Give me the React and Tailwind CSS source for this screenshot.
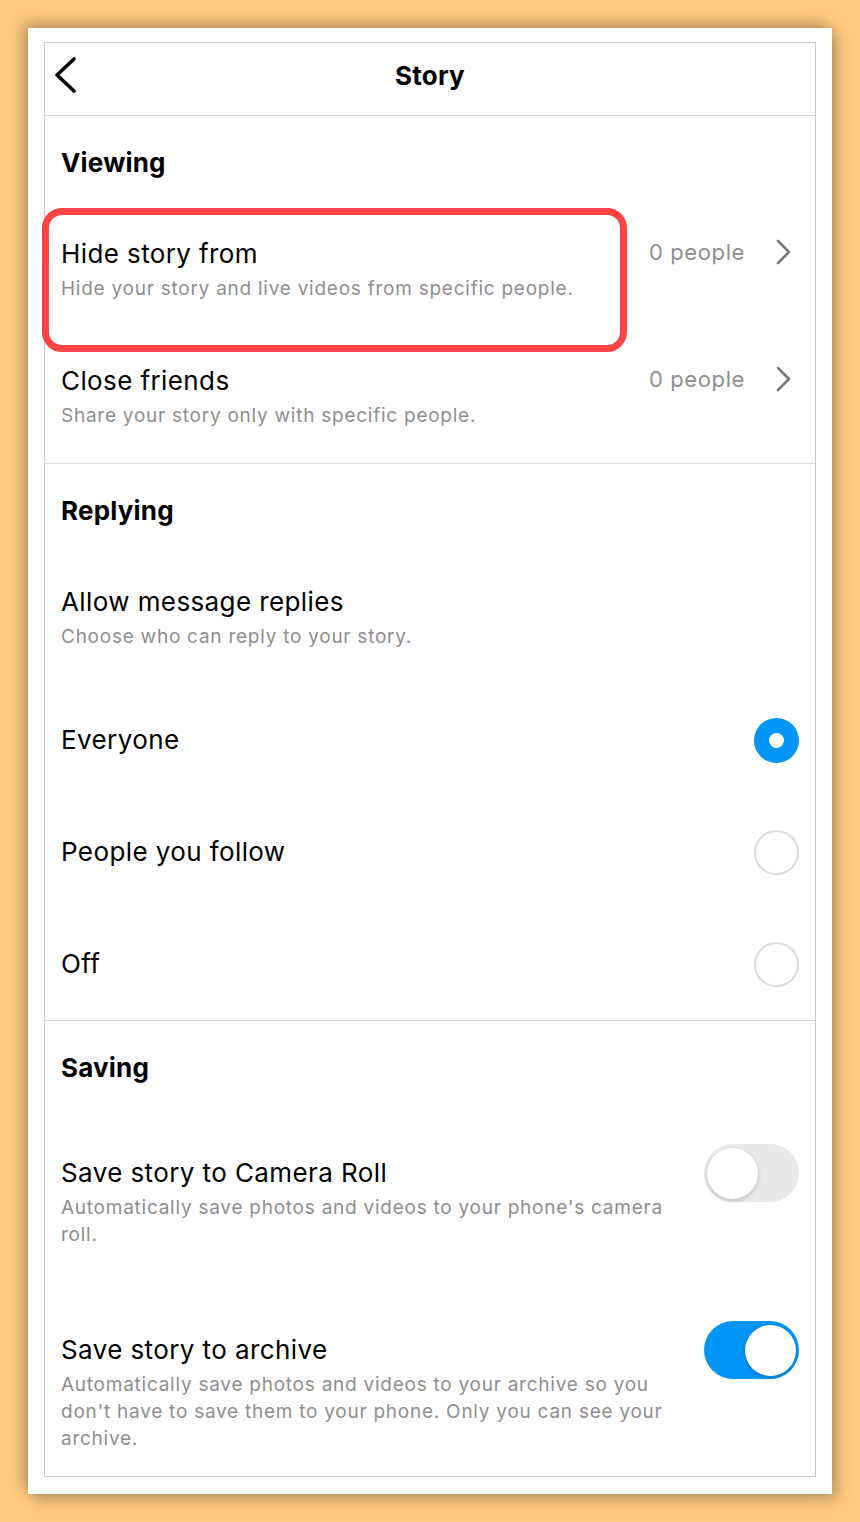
import { useState } from 'react';

const font = { fontFamily: 'Inter, "Noto Sans", sans-serif' };

const Chevron = () => (
  <svg width="18" height="28" viewBox="0 0 18 28" fill="none">
    <path d="M3 3 L14 14 L3 25" stroke="#7a7a7a" strokeWidth="2.6" strokeLinecap="round" strokeLinejoin="round" />
  </svg>
);

const Radio = ({ on }) =>
  on ? (
    <div className="w-[45px] h-[45px] rounded-full bg-[#0095f6] flex items-center justify-center">
      <div className="w-[15px] h-[15px] rounded-full bg-white" />
    </div>
  ) : (
    <div className="w-[45px] h-[45px] rounded-full border-2 border-[#dbdbdb]" />
  );

const Toggle = ({ on }) => (
  <div
    className={`w-[95px] h-[58px] rounded-full flex items-center px-[3px] ${
      on ? 'bg-[#0095f6] justify-end' : 'bg-[#e9e9e9] justify-start'
    }`}
  >
    <div className="w-[51px] h-[51px] rounded-full bg-white shadow-[0_2px_5px_rgba(0,0,0,0.2)]" />
  </div>
);

const Heading = ({ children }) => (
  <div className="h-[92px] flex items-center px-[16px]">
    <h2 className="text-[26px] font-bold text-black tracking-[0.2px]">{children}</h2>
  </div>
);

const Title = ({ children }) => (
  <p className="text-[26px] leading-[32px] text-black tracking-[0.4px]">{children}</p>
);

const Sub = ({ children }) => (
  <p className="mt-[5px] text-[19px] leading-[27px] text-[#8e8e8e] tracking-[0.75px]">{children}</p>
);

const LinkRow = ({ title, sub, count, h, children }) => (
  <div className={`relative ${h} px-[16px] pt-[30px] flex justify-between items-start`}>
    {children}
    <div>
      <Title>{title}</Title>
      <Sub>{sub}</Sub>
    </div>
    <div className="flex items-center gap-[30px] pr-[6px] mt-[-2px]">
      <span className="text-[22px] leading-[32px] text-[#8e8e8e] tracking-[0.6px]">{count}</span>
      <Chevron />
    </div>
  </div>
);

export default function App() {
  const [reply, setReply] = useState('everyone');
  const options = [
    { id: 'everyone', label: 'Everyone' },
    { id: 'follow', label: 'People you follow' },
    { id: 'off', label: 'Off' },
  ];

  return (
    <div className="w-[860px] h-[1522px] bg-[#fecb80] pt-[28px] pl-[28px]" style={font}>
      <div className="w-[804px] h-[1466px] bg-white pt-[14px] pl-[16px] shadow-[-5px_-5px_14px_rgba(0,0,0,0.25),5px_5px_14px_rgba(0,0,0,0.25)]">
        <div className="w-[772px] h-[1435px] border border-[#c8c8c8] bg-white">
          {/* Header */}
          <header className="h-[73px] border-b border-[#dbdbdb] flex items-center relative">
            <button className="absolute left-[8px] top-[12px]">
              <svg width="26" height="40" viewBox="0 0 26 40" fill="none">
                <path d="M21 4 L4 20 L21 36" stroke="#000" strokeWidth="3.6" strokeLinecap="round" strokeLinejoin="round" />
              </svg>
            </button>
            <h1 className="w-full text-center text-[26px] font-bold text-black mt-[-8px] tracking-[0.2px]">Story</h1>
          </header>

          {/* Viewing */}
          <section className="border-b border-[#dbdbdb]">
            <Heading>Viewing</Heading>
            <LinkRow
              h="h-[127px]"
              title="Hide story from"
              sub="Hide your story and live videos from specific people."
              count="0 people"
            >
              <div className="absolute left-[-3px] top-0 w-[585px] h-[144px] border-[7px] border-[#ff4444] rounded-[20px] pointer-events-none" />
            </LinkRow>
            <LinkRow
              h="h-[128px]"
              title="Close friends"
              sub="Share your story only with specific people."
              count="0 people"
            />
          </section>

          {/* Replying */}
          <section className="border-b border-[#dbdbdb]">
            <Heading>Replying</Heading>
            <div className="h-[128px] px-[16px] pt-[30px]">
              <Title>Allow message replies</Title>
              <Sub>Choose who can reply to your story.</Sub>
            </div>
            {options.map((o) => (
              <div
                key={o.id}
                onClick={() => setReply(o.id)}
                className="h-[112px] px-[16px] flex items-center justify-between cursor-pointer"
              >
                <span className="text-[26px] leading-[32px] text-black tracking-[0.4px]">{o.label}</span>
                <Radio on={reply === o.id} />
              </div>
            ))}
          </section>

          {/* Saving */}
          <section>
            <Heading>Saving</Heading>
            <div className="px-[16px] pt-[44px] flex justify-between items-start">
              <div className="w-[620px]">
                <Title>Save story to Camera Roll</Title>
                <Sub>Automatically save photos and videos to your phone's camera roll.</Sub>
              </div>
              <div className="mt-[-13px]">
                <Toggle on={false} />
              </div>
            </div>
            <div className="px-[16px] pt-[86px] flex justify-between items-start">
              <div className="w-[620px]">
                <Title>Save story to archive</Title>
                <Sub>
                  Automatically save photos and videos to your archive so you don't have to save them to your phone. Only you can see your archive.
                </Sub>
              </div>
              <div className="mt-[-13px]">
                <Toggle on={true} />
              </div>
            </div>
          </section>
        </div>
      </div>
    </div>
  );
}
